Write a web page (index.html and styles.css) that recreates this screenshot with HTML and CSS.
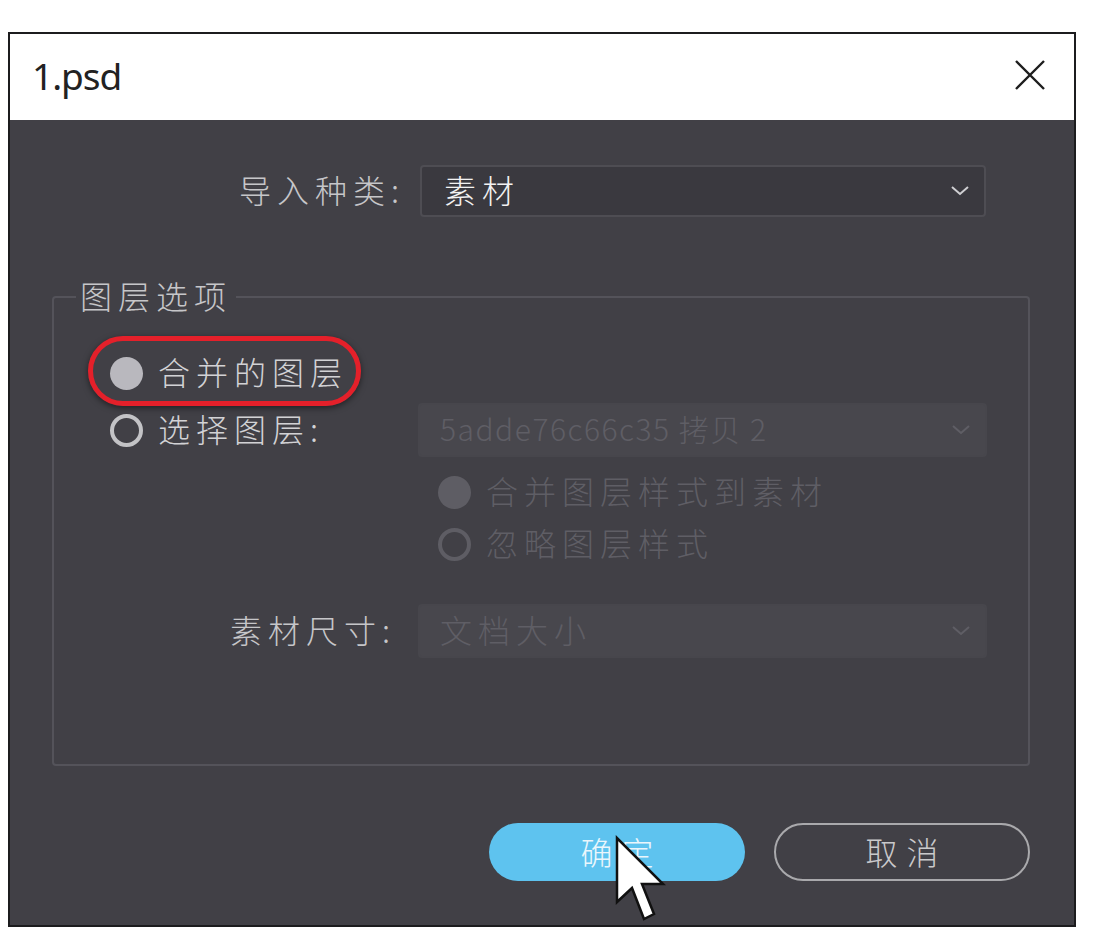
FILE: index.html
```
<!DOCTYPE html>
<html lang="zh-CN">
<head>
    <meta charset="UTF-8">
    <title>1.psd</title>
    <link rel="stylesheet" href="styles.css">
</head>
<body>
    <div class="window">
        <div class="titlebar">
            <span class="title">1.psd</span>
            <svg class="close" width="30" height="30" viewBox="0 0 30 30">
                <path d="M1 1 L29 29 M29 1 L1 29" stroke="#1e1e1e" stroke-width="2.4" fill="none"/>
            </svg>
        </div>

        <div class="content">
            <div class="field-row">
                <label class="label">导入种类:</label>
                <div class="select">
                    <span>素材</span>
                    <svg class="chev" width="18" height="10" viewBox="0 0 18 10"><polyline points="1,1 9,8 17,1" fill="none" stroke="currentColor" stroke-width="2"/></svg>
                </div>
            </div>

            <fieldset class="group">
                <legend>图层选项</legend>

                <div class="opt-row">
                    <span class="radio on"></span>
                    <span class="opt-text">合并的图层</span>
                    <span class="mark"></span>
                </div>

                <div class="layer-row">
                    <div class="opt-row">
                        <span class="radio off"></span>
                        <span class="opt-text">选择图层:</span>
                    </div>
                    <div class="select disabled">
                        <span class="mono">5adde76c66c35 拷贝 2</span>
                        <svg class="chev" width="18" height="10" viewBox="0 0 18 10"><polyline points="1,1 9,8 17,1" fill="none" stroke="currentColor" stroke-width="2"/></svg>
                    </div>
                </div>

                <div class="sub-opts disabled">
                    <div class="opt-row">
                        <span class="radio on"></span>
                        <span class="opt-text">合并图层样式到素材</span>
                    </div>
                    <div class="opt-row">
                        <span class="radio off"></span>
                        <span class="opt-text">忽略图层样式</span>
                    </div>
                </div>

                <div class="size-row">
                    <label class="label">素材尺寸:</label>
                    <div class="select disabled">
                        <span>文档大小</span>
                        <svg class="chev" width="18" height="10" viewBox="0 0 18 10"><polyline points="1,1 9,8 17,1" fill="none" stroke="currentColor" stroke-width="2"/></svg>
                    </div>
                </div>
            </fieldset>

            <div class="actions">
                <button class="btn primary">确定</button>
                <button class="btn secondary">取消</button>
                <svg class="cursor" width="52" height="90" viewBox="-3 -3 52 90">
                    <polygon points="0,0 0,64 15,50 27,81 37,76 25,46 46,46" fill="#fff" stroke="#111" stroke-width="2.5" stroke-linejoin="miter"/>
                </svg>
            </div>
        </div>
    </div>
</body>
</html>
```

FILE: styles.css
```
body {
    margin: 0;
    background: #fff;
    font-family: "Noto Sans CJK SC", "Noto Sans", sans-serif;
    font-weight: 300;
}
.window {
    width: 1068px;
    height: 895px;
    margin: 32px 0 0 8px;
    border: 2px solid #1c1c1e;
    box-sizing: border-box;
    display: flex;
    flex-direction: column;
}
.titlebar {
    height: 86px;
    flex-shrink: 0;
    background: #fff;
    display: flex;
    align-items: center;
    justify-content: space-between;
    padding: 0 29px 4px 22px;
    box-sizing: border-box;
}
.title {
    font-family: "Noto Sans", sans-serif;
    font-weight: 400;
    font-size: 37px;
    color: #222;
    letter-spacing: -1px;
}
.content {
    flex: 1;
    background: #414046;
    padding: 45px 44px 0 42px;
}
.field-row {
    display: grid;
    grid-template-columns: 353px 566px;
    column-gap: 15px;
    align-items: center;
}
.label {
    text-align: right;
    font-size: 32px;
    letter-spacing: 6px;
    color: #c6c6c9;
    line-height: 1;
    padding-bottom: 4px;
}
.select {
    height: 52px;
    box-sizing: border-box;
    border: 2px solid #4e4d53;
    background: #3a393f;
    border-radius: 4px;
    display: flex;
    align-items: center;
    justify-content: space-between;
    padding: 0 15px 4px 22px;
    font-size: 32px;
    letter-spacing: 6px;
    color: #f2f2f2;
}
.chev {
    color: #cfcfd2;
    margin-top: 4px;
}
.select.disabled {
    height: 54px;
    background: #48474d;
    border-color: #47464c;
    color: #5f5e65;
    padding-left: 20px;
}
.select.disabled .chev {
    color: #5f5e65;
}
.mono {
    font-size: 30px;
    letter-spacing: 1.5px;
}
.group {
    margin: 62px 0 0 0;
    padding: 32px 41px 106px 56px;
    border: 2px solid #54535a;
    border-radius: 4px;
    min-width: 0;
}
.group legend {
    margin-left: -34px;
    padding: 0 4px 4px;
    font-size: 32px;
    line-height: 32px;
    letter-spacing: 6px;
    color: #c6c6c9;
}
.opt-row {
    height: 52px;
    display: flex;
    align-items: center;
    position: relative;
}
.radio {
    width: 33px;
    height: 33px;
    border-radius: 50%;
    box-sizing: border-box;
    flex-shrink: 0;
    margin-right: 15px;
}
.radio.on {
    background: #b9b8be;
}
.radio.off {
    border: 4px solid #c3c3c6;
}
.opt-text {
    font-size: 32px;
    letter-spacing: 6px;
    color: #d2d2d5;
    line-height: 1;
    padding-bottom: 4px;
}
.mark {
    position: absolute;
    left: -22px;
    top: -11px;
    width: 273px;
    height: 70px;
    box-sizing: border-box;
    border: 5px solid #e4202a;
    border-radius: 35px;
    box-shadow: 0 2px 6px rgba(0,0,0,0.5);
}
.layer-row {
    display: grid;
    grid-template-columns: 308px 569px;
    align-items: center;
    margin-top: 4px;
}
.sub-opts {
    margin: 9px 0 0 328px;
}
.sub-opts .radio.on {
    background: #5e5d64;
}
.sub-opts .radio.off {
    border-color: #5e5d64;
}
.sub-opts .opt-text {
    color: #5f5e65;
}
.size-row {
    display: grid;
    grid-template-columns: 280px 569px;
    column-gap: 28px;
    align-items: center;
    margin-top: 34px;
}
.size-row .label {
    margin-right: -6px;
}
.actions {
    position: relative;
    display: flex;
    justify-content: flex-end;
    gap: 29px;
    margin-top: 57px;
}
.btn {
    width: 256px;
    height: 58px;
    border-radius: 29px;
    box-sizing: border-box;
    font-family: "Noto Sans CJK SC", sans-serif;
    font-weight: 300;
    font-size: 32px;
    letter-spacing: 9px;
    padding: 0 0 3px 9px;
}
.primary {
    background: #5ec3ef;
    border: none;
    color: #eaf6fc;
}
.secondary {
    background: transparent;
    border: 2px solid #a9a9ac;
    color: #c9c9cb;
}
.cursor {
    position: absolute;
    left: 562px;
    top: 12px;
}
```
